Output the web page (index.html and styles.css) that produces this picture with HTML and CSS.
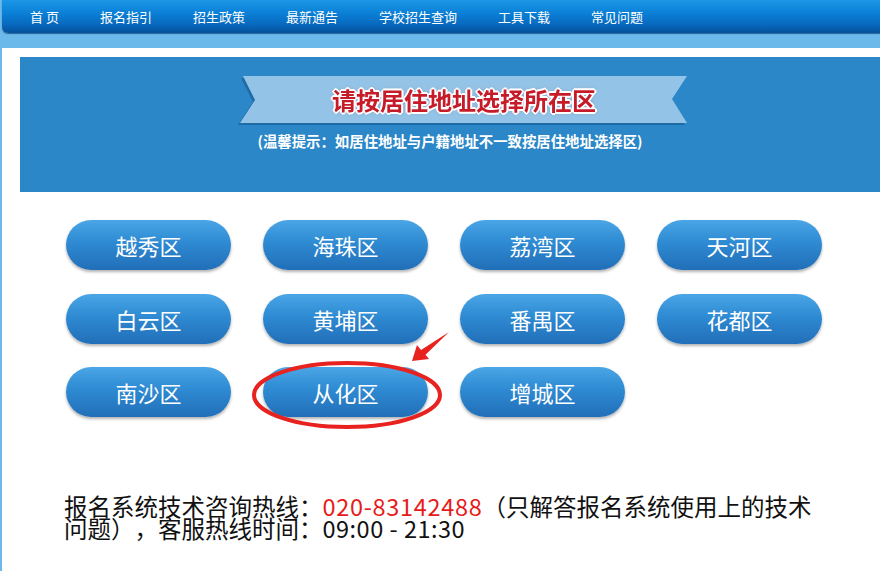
FILE: index.html
```html
<!DOCTYPE html>
<html lang="zh-CN">
<head>
<meta charset="utf-8">
<title>请按居住地址选择所在区</title>
<link rel="stylesheet" href="styles.css">
</head>
<body>
<nav class="nav">
  <a class="nav-item">首 页</a>
  <a class="nav-item">报名指引</a>
  <a class="nav-item">招生政策</a>
  <a class="nav-item">最新通告</a>
  <a class="nav-item">学校招生查询</a>
  <a class="nav-item">工具下载</a>
  <a class="nav-item">常见问题</a>
</nav>
<main class="page">
  <section class="banner">
    <div class="ribbon-wrap">
      <div class="ribbon"><h1 class="ribbon-title">请按居住地址选择所在区</h1></div>
    </div>
    <p class="tip">(温馨提示：如居住地址与户籍地址不一致按居住地址选择区)</p>
  </section>
  <div class="districts">
    <a class="district">越秀区</a>
    <a class="district">海珠区</a>
    <a class="district">荔湾区</a>
    <a class="district">天河区</a>
    <a class="district">白云区</a>
    <a class="district">黄埔区</a>
    <a class="district">番禺区</a>
    <a class="district">花都区</a>
    <a class="district">南沙区</a>
    <a class="district">从化区</a>
    <a class="district">增城区</a>
  </div>
  <p class="hotline">报名系统技术咨询热线：<span class="phone">020-83142488</span>（只解答报名系统使用上的技术问题），客服热线时间：<span class="hours">09:00 - 21:30</span></p>
  <svg class="mark" width="220" height="120" viewBox="0 0 220 120" aria-hidden="true">
    <ellipse cx="107" cy="75" rx="93" ry="32" fill="none" stroke="#e8231f" stroke-width="4"/>
    <polygon points="172,41 189,39 185.5,34.8 209,12 181,30 177,25" fill="#e8231f"/>
  </svg>
</main>
</body>
</html>
```
FILE: styles.css
```css
html, body {
  margin: 0;
  padding: 0;
}
body {
  background: #6bb8ea;
  font-family: "Noto Sans CJK SC", "Noto Sans", sans-serif;
  width: 880px;
  height: 571px;
  overflow: hidden;
  text-spacing-trim: space-all;
}
.nav {
  height: 33px;
  margin-left: 2px;
  display: flex;
  align-items: center;
  gap: 41px;
  padding-left: 28px;
  box-sizing: border-box;
  border-bottom-left-radius: 6px;
  background: linear-gradient(#1b97e6 0%, #0a80d6 40%, #0868bd 75%, #05519b 100%);
  box-shadow: 0 1px 1px rgba(0, 40, 90, 0.6);
}
.nav-item {
  color: #fff;
  font-size: 13px;
  line-height: 33px;
  white-space: pre;
  text-decoration: none;
}
.page {
  position: relative;
  margin: 15px 0 0 2px;
  background: #fff;
  padding: 9px 0 0 18px;
  height: 523px;
  box-sizing: border-box;
}
.banner {
  background: #2b87c8;
  height: 135px;
  padding-top: 19px;
  box-sizing: border-box;
}
.ribbon-wrap {
  margin-left: 220px;
  width: 448px;
  filter: drop-shadow(-2px 2px 0 #1f6ba5);
}
.ribbon {
  height: 47px;
  background: #93c4e7;
  clip-path: polygon(3px 0, 447px 0, 432px 23px, 447px 47px, 0 47px, 15px 24px);
  display: flex;
  align-items: center;
  justify-content: center;
}
.ribbon-title {
  margin: 0;
  font-size: 24px;
  font-weight: 700;
  color: #c61b28;
  line-height: 47px;
  text-shadow:
    1px 1px 0 #fff, -1px -1px 0 #fff, 1px -1px 0 #fff, -1px 1px 0 #fff,
    2px 0 0 #fff, -2px 0 0 #fff, 0 2px 0 #fff, 0 -2px 0 #fff,
    0 0 4px rgba(120, 0, 0, 0.35);
}
.tip {
  margin: 10px 0 0;
  text-align: center;
  color: #fff;
  font-size: 14.4px;
  font-weight: 700;
  line-height: 16px;
}
.districts {
  display: grid;
  grid-template-columns: repeat(4, 165px);
  grid-auto-rows: 50px;
  column-gap: 32px;
  row-gap: 23.5px;
  margin: 28px 0 0 46px;
}
.district {
  border-radius: 25px;
  background: linear-gradient(#4aa6e6 0%, #2e8ad2 45%, #216fb8 100%);
  box-shadow: 0 2px 3px rgba(0, 0, 0, 0.3);
  color: #fff;
  font-size: 22px;
  display: flex;
  align-items: center;
  justify-content: center;
  text-decoration: none;
}
.hotline {
  margin: 78px 0 0 44px;
  width: 760px;
  font-size: 23.5px;
  line-height: 22px;
  color: #111;
}
.phone {
  color: #e81b1b;
  letter-spacing: 0.7px;
}
.hours {
  letter-spacing: 0.5px;
}
.mark {
  position: absolute;
  left: 238px;
  top: 272px;
}
```
